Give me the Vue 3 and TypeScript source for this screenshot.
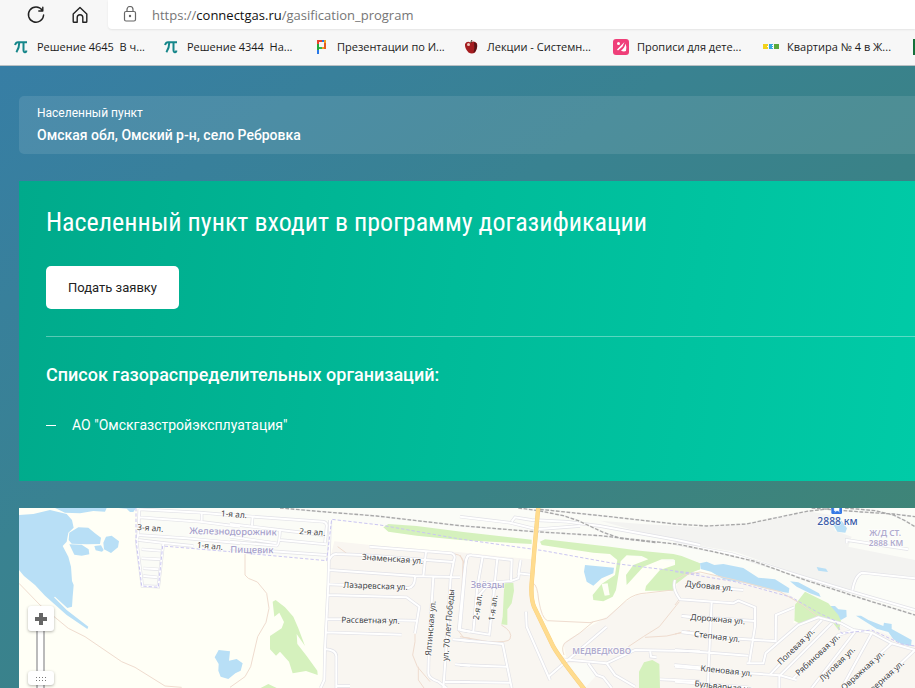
<script setup lang="ts">
import { computed, ref } from 'vue'

interface Bookmark { title: string; icon: string }
interface Shape { kind: string; dx: number; d: string }
interface Label { kind: string; x: number; y: number; text: string; angle?: number }

const bookmarks: Bookmark[] = [
  { title: 'Решение 4645  В ч...', icon: 'pi' },
  { title: 'Решение 4344  На...', icon: 'pi' },
  { title: 'Презентации по И...', icon: 'p' },
  { title: 'Лекции - Системн...', icon: 'apple' },
  { title: 'Прописи для дете...', icon: 'pink' },
  { title: 'Квартира № 4 в Ж...', icon: 'squares' },
  { title: '', icon: 'green' },
]

const organizations = ['АО "Омскгазстройэксплуатация"']
const zoomLevel = ref(106)

// Map geometry: dx is the horizontal origin of each map sector.
const W = 0
const M = 690
const C = 1380
const E = 2025

const shapes: Shape[] = [
  { kind: 'pale', dx: 0, d: 'M410 24H2745V440L2600 395 2525 390 2480 340 2360 285 2050 190 1640 130 1000 60 990 180 600 150 490 135 480 265 425 260Z' },
  { kind: 'industry', dx: E, d: 'M-225 62L-100 72 80 82 220 70 400 34 466 45 480 92 530 110 520 140 720 180V230L560 216 530 270 350 215 180 155 0 125Z' },
  { kind: 'urban', dx: M, d: 'M313 124L450 138 690 157 905 178 902 310 970 440 1010 480 1000 430 1020 415 1130 350 1180 310 1220 285 1335 272 1345 235 1390 218 1500 232 1665 275 1700 300 1690 370 1780 350 1860 392 1950 395 2060 440V570H275L290 410 298 185Z' },
  { kind: 'urban', dx: C, d: 'M310 478L400 485 390 540 350 564 280 440Z' },
  { kind: 'pale', dx: C, d: 'M315 490L388 490 410 525 375 564Z' },

  { kind: 'water', dx: W, d: 'M57 45L100 42 150 30 200 42 216 60 221 83 205 98 200 125 188 138 205 170 213 200 216 243 221 255 218 290 216 320 202 324 165 290 162 292 200 330 265 380 262 387 200 345 135 287 105 255 72 228 57 210Z' },
  { kind: 'water', dx: W, d: 'M165 24L195 38 240 40 280 33 315 35 320 24Z M355 24H408L400 36 390 36 380 26Z' },
  { kind: 'water', dx: W, d: 'M208 98L235 82 265 83 285 100 303 113 300 132 260 133 215 131 206 120Z M208 133L245 134 266 148 268 163 245 167 223 164Z M283 138L303 136 311 150 306 155 287 151Z M318 110L335 107 357 124 354 142 333 159 312 148 310 128Z' },
  { kind: 'water', dx: W, d: 'M656 450L690 454 687 482 710 477 728 490 722 512 706 520 685 537 662 530 655 512 656 492 644 472Z' },
  { kind: 'water', dx: C, d: 'M375 195L462 203 460 220 425 235 400 257 380 245 372 215Z' },
  { kind: 'water', dx: E, d: 'M75 190L95 185 118 195 145 192 205 204 250 233 300 238 343 265 341 279 280 268 215 250 145 237 108 215 77 207Z M345 244L370 247 432 280 437 291 405 280 365 260Z M425 201L453 206 459 216 430 212Z M467 318L480 318 490 328 514 330 515 350 498 360 480 352Z M543 347L558 347 580 360 625 378 627 368 650 372 650 387 710 420 708 438 680 432 655 418 640 396 605 386Z M468 62L500 62 516 85 511 98 487 95Z' },

  { kind: 'green', dx: M, d: 'M128 305L137 300 165 322 190 350 205 385 225 438 200 402 202 432 230 468 262 512 263 525 228 513 188 520 177 485 150 455 138 467 120 448 120 408 155 385 162 366 148 338 133 350Z M92 564L115 552 140 564Z' },
  { kind: 'green', dx: M, d: 'M460 82L475 72 560 78 700 96 905 119 905 132 690 120 560 107 475 95Z' },
  { kind: 'green', dx: C, d: 'M240 125L255 118 450 140 540 152 640 162 665 168 720 190 720 208 690 220 640 258 640 272 555 272 558 258 600 210 660 190 640 178 605 178 550 200 500 255 498 225 520 195 565 178 545 168 500 166 482 184 468 270 458 290 430 304 400 300 398 285 425 252 465 225 472 180 450 162 400 158 245 135Z' },
  { kind: 'base', dx: C, d: 'M425 252L443 250 449 285 434 287Z' },
  { kind: 'green', dx: C, d: 'M133 250L160 248 162 272 155 310 142 328 142 375 124 373 128 350Z M537 515L552 487 577 480 598 492 600 564H537Z' },
  { kind: 'green', dx: E, d: 'M0 167L72 190 75 208 20 222 0 243Z M360 314L390 275 460 310 490 345 498 362 492 392 475 370 430 352 373 370 358 362Z' },
]

const trails: Shape[] = [
  { kind: '', dx: W, d: 'M57 250L120 315 205 385 255 410 365 485 405 502 495 558 545 562' },
  { kind: '', dx: M, d: 'M45 162V225L55 235 82 246 110 280 117 325 108 367 83 410 62 500 45 530 0 562 M323 140L350 160 M675 162Q700 165 702 195L698 250 695 310 683 390 700 412 720 415 M555 402V425L548 465 562 500 600 545 M565 500V540L582 564' },
  { kind: '', dx: C, d: 'M0 165L9 185 5 300 0 380 M220 250Q232 255 236 300Q245 355 262 362L390 368 440 355 500 300Q525 280 560 279L638 270 M400 365Q360 402 316 428Q302 440 312 465 M505 440L550 410 598 380 658 305 M555 412L620 408 690 392 M124 375Q160 395 150 417Q145 428 85 425L0 410' },
  { kind: '', dx: E, d: 'M0 240L30 224 75 216 180 240 315 275 375 310 440 358 M0 315L15 295 M0 402L40 393' },
]

const roads: Shape[] = [
  { kind: 'minor', dx: W, d: 'M418 28L415 100 410 125 427 258 475 260 490 130 M418 52L600 65 720 80 M418 28L605 38 720 48 M605 35V62 M412 105L560 115 720 130 M415 120L484 128 580 138 M425 148L482 152 M425 175L480 178 M430 205L475 208 M430 228L472 232' },
  { kind: 'minor', dx: M, d: 'M0 45L280 65Q292 68 290 80L285 128 M68 48L66 76 M0 72L150 90 280 105 M0 110L140 130 M0 125L140 137Q148 135 150 90 M0 145L290 165 M150 120L288 133' },
  { kind: '', dx: M, d: 'M300 60L295 250 285 445 283 540 272 564 M295 185Q305 160 320 162L400 165 590 180 670 186 M418 140L665 160Q678 165 672 180L662 232 M588 155L580 228 M298 210L555 228 690 232 M298 253L535 264Q556 260 555 228 M295 285L530 292 568 320 555 400 M290 357L560 362 M285 397L515 404 M285 447Q320 450 319 470V564 M319 558H360 M610 232L597 430 595 520Q595 535 625 545L650 564 M662 232L650 430 640 564 M715 165Q705 180 700 250L686 388 720 395 M668 418L720 423 M675 493L720 497 M645 546H720' },
  { kind: '', dx: C, d: 'M0 390L88 404 112 175 M0 390L18 180Q22 163 35 166L155 180 153 240 M68 170L52 260 40 395 M0 420L128 432 155 564 M0 495L140 500 M0 546L152 548 M53 290L90 248 153 243 175 235 177 220 212 224 M182 180L175 225 M198 335L200 380 270 540 M265 530L440 380 M310 478L440 490 525 450 720 454 M385 490L410 525 430 532 455 564 M440 490L465 525 525 560 M570 450L573 470 590 472 M600 538L720 544 M643 495L720 502 M665 348L720 355 M665 395L720 402' },
  { kind: '', dx: E, d: 'M0 240Q-10 265 15 298L175 310 190 302 240 322 240 380 222 492 M30 255L205 270 M110 305L98 564 M20 348L240 363 M20 397L160 414 305 424 M0 450L220 467 M0 500L225 520 315 526 365 540 M0 545L220 562 M215 490H265L272 460 370 375 430 352 498 370 535 390 590 398 650 430 720 450 M358 322L303 345 302 425 M285 524L440 360 M315 526L470 370 M313 526V564 M410 564L540 395 M500 564L590 400 M505 564L650 430 M600 564L720 450 M355 535L490 405 540 390 M532 272Q540 225 562 218L720 235 M515 130V120L700 148' },
  { kind: 'minor', dx: C, d: 'M155 65L165 52 215 60 320 65 420 78 650 120 720 135 M0 50L150 68 230 88 360 78' },
  { kind: 'minor', dx: E, d: 'M0 130L170 162 350 220 530 275 720 330' },
]

const rails: Shape[] = [
  { kind: '', dx: M, d: 'M150 24L300 37 440 48 690 77 900 94 1110 107 1345 133 1450 155 1570 183 1725 240 1900 297 2055 345' },
  { kind: '', dx: C, d: 'M175 24L235 32 310 47 355 62 430 97 480 115 590 128 M240 28L450 50 645 72 740 78 860 72 1040 34 1120 25' },
  { kind: '', dx: E, d: 'M410 24L560 36 655 42 720 50 M510 24L600 32 655 45 690 62 720 80' },
]

const borders: Shape[] = [
  { kind: '', dx: W, d: 'M408 24V120L425 258 475 262 488 138 690 155' },
  { kind: '', dx: M, d: 'M50 160L290 182 305 58 450 75 690 117 940 152 1150 190 1410 222' },
  { kind: '', dx: E, d: 'M0 215L180 245 350 292 430 338 480 362 500 400 590 390 680 432 720 438' },
]

const labels: Label[] = [
  { kind: 'street', x: 662, y: 49, text: '1-я ал.', angle: 4 },
  { kind: 'street', x: 411, y: 90, text: '3-я ал.', angle: 4 },
  { kind: 'street', x: 590, y: 143, text: '1-я ал.', angle: 5 },
  { kind: 'street', x: 897, y: 102, text: '2-я ал.', angle: 4 },
  { kind: 'place', x: 568, y: 102, text: 'Железнодорожник', angle: 1 },
  { kind: 'place', x: 691, y: 158, text: 'Пищевик', angle: 1 },
  { kind: 'street', x: 1085, y: 179, text: 'Знаменская ул.', angle: 4 },
  { kind: 'street', x: 1030, y: 263, text: 'Лазаревская ул.', angle: 2 },
  { kind: 'street', x: 1024, y: 368, text: 'Рассветная ул.', angle: 1 },
  { kind: 'street', x: 1293, y: 468, text: 'Ялтинская ул.', angle: -85 },
  { kind: 'street', x: 1344, y: 484, text: 'ул. 70 лет Победы', angle: -85 },
  { kind: 'street', x: 1436, y: 361, text: '2-я ал.', angle: -82 },
  { kind: 'street', x: 1483, y: 364, text: '1-я ал.', angle: -83 },
  { kind: 'place', x: 1412, y: 264, text: 'Звёзды' },
  { kind: 'district', x: 1717, y: 462, text: 'МЕДВЕДКОВО' },
  { kind: 'street', x: 2056, y: 259, text: 'Дубовая ул.', angle: 6 },
  { kind: 'street', x: 2071, y: 359, text: 'Дорожная ул.', angle: 5 },
  { kind: 'street', x: 2081, y: 410, text: 'Степная ул.', angle: 7 },
  { kind: 'street', x: 2101, y: 513, text: 'Кленовая ул.', angle: 6 },
  { kind: 'street', x: 2083, y: 559, text: 'Бульварная ул.', angle: 6 },
  { kind: 'street', x: 2342, y: 496, text: 'Полевая ул.', angle: -44 },
  { kind: 'street', x: 2396, y: 529, text: 'Рябиновая ул.', angle: -43 },
  { kind: 'street', x: 2468, y: 546, text: 'Луговая ул.', angle: -44 },
  { kind: 'street', x: 2533, y: 572, text: 'Овражная ул.', angle: -42 },
  { kind: 'street', x: 2598, y: 596, text: 'Северная ул.', angle: -42 },
  { kind: 'station', x: 2452, y: 74, text: '2888 км' },
  { kind: 'district', x: 2608, y: 109, text: 'Ж/Д СТ.' },
  { kind: 'district', x: 2606, y: 137, text: '2888 КМ' },
]

const lines = computed(() => [
  { name: 'trail', items: trails },
  { name: 'casing', items: roads },
  { name: 'road', items: roads },
  { name: 'rail-gap', items: rails },
  { name: 'rail', items: rails },
  { name: 'border', items: borders },
])
</script>

<template>
  <div class="window">
    <header class="browser">
      <div class="toolbar">
        <div class="nav">
          <button type="button" aria-label="Обновить">
            <svg width="20" height="20" viewBox="0 0 20 20" class="line">
              <path d="M16.2 5.2A7.6 7.6 0 1 0 17.6 10M16.8 2.2V6H12.8" />
            </svg>
          </button>
          <button type="button" aria-label="Домой">
            <svg width="20" height="20" viewBox="0 0 20 20" class="line">
              <path d="M3.2 8.9L10 2.6l6.800 6.300V16.400q0 .8-.8.8h-3.200v-4.700a2.800 2.800 0 0 0-5.600 0v4.700H4q-.8 0-.8-.8Z" />
            </svg>
          </button>
        </div>
        <div class="address">
          <svg width="16" height="18" viewBox="0 0 16 18" class="lock">
            <rect x="2.500" y="5.500" width="11" height="9.500" rx="1.500" />
            <path d="M5 5.500V3.500a3 3 0 0 1 6 0v2" />
            <circle cx="8" cy="10" r=".6" />
          </svg>
          <a href="#" class="url">https://<span class="host">connectgas.ru</span>/gasification_program</a>
        </div>
      </div>
      <nav class="bookmarks">
        <a v-for="(b, i) in bookmarks" :key="i" href="#" class="bookmark">
          <svg width="16" height="16" viewBox="0 0 16 16">
            <g v-if="b.icon === 'pi'" class="pi">
              <path d="M2 6Q3 3.200 5 3.200H14M6.300 3.500Q6.300 9 3.400 13.200M10.500 3.500V11Q10.500 13.400 12.200 13.200 13.300 13 13.500 11.500" />
            </g>
            <g v-else-if="b.icon === 'p'">
              <path fill="#e8432d" d="M4 1h5v2H6v2H4z" />
              <path fill="#20a83a" d="M4 5h2v6H4z" />
              <path fill="#2878e8" d="M4 11h2v4H4zM9 1h2v2H9z" />
              <path fill="#38b34a" d="M6 8h3v2H6z" />
              <path fill="#f0a020" d="M11 1h2v3h-2zM9 8h2v2H9z" />
              <path fill="#e55a22" d="M11 4h2v6h-2z" />
            </g>
            <g v-else-if="b.icon === 'apple'">
              <path fill="#a51d20" d="M7.500 3.500Q11 1 14 4.500 15 9 12 13.500 9 15.500 5.500 13.500 1.500 9.500 2 5 4 1.500 7.500 3.500Z" />
              <path fill="#571517" d="M11 3Q14.500 4 14 8q-.5 4-3.500 6 1.500-5 .5-11Z" />
              <ellipse cx="5.500" cy="5.500" rx="1.500" ry="1.500" fill="#f0c8be" />
              <path stroke="#48301c" d="M8 4Q8 2 9 1" fill="none" />
            </g>
            <g v-else-if="b.icon === 'pink'">
              <rect width="16" height="16" rx="3" fill="#ef3f79" />
              <circle cx="5.500" cy="4.500" r="1.500" fill="#fff" />
              <path fill="#fff" d="M11.500 3L4 10.500 5 11.500 9.500 7.500ZM12.500 4.500Q14 8 13 12 10.500 13 8 11.500 11.500 9.500 12.500 4.500Z" />
            </g>
            <g v-else-if="b.icon === 'squares'">
              <path fill="#f2d21b" d="M0 5h5v5H0z" />
              <path fill="#35a8e0" d="M6 5h4v5H6z" />
              <path fill="#5aa83c" d="M11 5h5v5h-5z" />
              <path fill="#fff" d="M4 7h1v1H4zM9 6h1v1H9zm0 2h1v1H9z" />
            </g>
            <path v-else fill="#14713a" d="M0 0h16v16H0z" />
          </svg>
          <span>{{ b.title }}</span>
        </a>
      </nav>
    </header>

    <main class="page">
      <section class="place-card">
        <div class="caption">Населенный пункт</div>
        <div class="value">Омская обл, Омский р-н, село Ребровка</div>
      </section>

      <section class="program">
        <h1>Населенный пункт входит в программу догазификации</h1>
        <button type="button" class="apply">Подать заявку</button>
        <hr />
        <h2>Список газораспределительных организаций:</h2>
        <ul>
          <li v-for="o in organizations" :key="o">{{ o }}</li>
        </ul>
      </section>

      <section class="map">
        <svg class="canvas" viewBox="57 24 2688 540" preserveAspectRatio="xMinYMin slice">
          <path
            v-for="(s, i) in shapes"
            :key="i"
            :class="s.kind"
            :d="s.d"
            :transform="`translate(${s.dx} 0)`"
          />
          <g v-for="l in lines" :key="l.name" :class="l.name">
            <path
              v-for="(s, i) in l.items"
              :key="i"
              :class="s.kind"
              :d="s.d"
              :transform="`translate(${s.dx} 0)`"
            />
          </g>
          <path class="highway-edge" d="M1615 20L1603 150 1595 250Q1592 295 1602 320L1660 440Q1680 475 1755 570" />
          <path class="highway" d="M1615 20L1603 150 1595 250Q1592 295 1602 320L1660 440Q1680 475 1755 570" />
          <rect x="2494" y="12" width="32" height="30" rx="4" fill="#3478e5" />
          <path d="M2503 24h14v8h-14zM2505 37l4-5m6 0l4 5" fill="#fff" stroke="#fff" stroke-width="2" />
          <text
            v-for="(t, i) in labels"
            :key="i"
            :class="t.kind"
            :transform="`translate(${t.x} ${t.y}) rotate(${t.angle ?? 0})`"
          >{{ t.text }}</text>
        </svg>
        <div class="zoom">
          <button type="button" aria-label="Приблизить">
            <svg width="14" height="14" viewBox="0 0 14 14"><path d="M5 1h4v4h4v4H9v4H5V9H1V5h4z" fill="#666" /></svg>
          </button>
          <input v-model.number="zoomLevel" type="range" min="0" max="146" aria-label="Масштаб" />
        </div>
      </section>
    </main>
  </div>
</template>

<style>
body { margin: 0; overflow: hidden; }
</style>

<style scoped>
.window { min-height: 100vh; display: flex; flex-direction: column; box-sizing: border-box; }
button { font: inherit; border: 0; padding: 0; cursor: pointer; }
a { color: inherit; text-decoration: none; }

.browser {
  background: #f7f7f7;
  border-bottom: 1px solid #b9c0c4;
  font-family: "Open Sans", "Noto Sans", sans-serif;
  color: #1b1b1b;
}
.toolbar { display: flex; height: 29px; }
.nav { display: flex; align-items: center; gap: 24px; padding: 0 18px 0 26px; }
.nav button { display: flex; background: none; }
.line { fill: none; stroke: #222; stroke-width: 1.4; stroke-linejoin: round; stroke-linecap: round; }
.address {
  flex: 1;
  display: flex;
  align-items: center;
  gap: 14px;
  padding-left: 14px;
  background: #fff;
  border-radius: 0 0 0 4px;
  box-shadow: 0 1px 2px rgba(0, 0, 0, 0.08);
}
.lock { fill: none; stroke: #666; stroke-width: 1.2; }
.url { font-size: 13px; line-height: 20px; color: #767676; white-space: nowrap; }
.host { color: #111; }
.bookmarks { display: flex; height: 36px; align-items: center; padding-left: 13px; overflow: hidden; }
.bookmark {
  flex: 0 0 150px;
  display: flex;
  align-items: center;
  gap: 8px;
  font-size: 11px;
  line-height: 16px;
  white-space: pre;
}
.pi { fill: none; stroke: #16868a; stroke-width: 2; }

.page {
  flex: 1;
  display: flex;
  flex-direction: column;
  gap: 27px;
  padding: 30px 0 0 19px;
  background: linear-gradient(145deg, #377ea5 0%, #398291 38%, #3a8286 60%, #418670 100%);
  font-family: Roboto, "Liberation Sans", sans-serif;
  color: #fff;
}
.place-card {
  display: flex;
  flex-direction: column;
  gap: 3px;
  padding: 9px 18px;
  border-radius: 5px 0 0 5px;
  background: rgba(255, 255, 255, 0.1);
}
.caption { font-size: 12px; line-height: 17px; }
.value { font-size: 14px; line-height: 20px; font-weight: 500; }

.program {
  padding: 25px 0 46px 27px;
  background: linear-gradient(98deg, #00aa8b 0%, #00bb99 48%, #00cba7 100%);
}
h1 {
  margin: 0 0 28px;
  font: 400 26px/32px "Roboto Condensed", "Liberation Sans Narrow", Roboto, sans-serif;
}
.apply {
  display: block;
  padding: 0 22px;
  border-radius: 5px;
  background: #fff;
  color: #222;
  font-size: 13px;
  line-height: 43px;
}
hr { margin: 27px 0 26px; border: 0; height: 1px; background: rgba(255, 255, 255, 0.35); }
h2 { margin: 0 0 28px; font-size: 18px; line-height: 24px; font-weight: 500; }
ul { margin: 0; padding: 0; list-style: none; }
li { display: flex; align-items: center; gap: 16px; font-size: 14px; line-height: 20px; }
li::before { content: ""; width: 10px; height: 1px; background: #fff; }

.map { position: relative; flex: 1 0 180px; overflow: hidden; background: #fffff6; }
.canvas { position: absolute; inset: 0; width: 100%; height: 100%; }
.pale { fill: #fbfcf7; }
.base { fill: #fffff6; }
.industry { fill: #f3f3f1; }
.urban { fill: #f9f6f1; }
.water { fill: #b8dff6; }
.green { fill: #d5f1bd; }
.trail, .casing, .road, .rail, .rail-gap, .border, .highway, .highway-edge { fill: none; }
.casing path, .road path, .rail path, .rail-gap path { fill: none; }
.trail { stroke: #efdccf; stroke-width: 3; }
.casing { stroke: #e2e2e7; stroke-width: 10; }
.road { stroke: #fff; stroke-width: 6; }
.rail-gap { stroke: #f4f4f2; stroke-width: 6; }
.rail { stroke: #a8a8a8; stroke-width: 4; stroke-dasharray: 11 5; }
.border { stroke: #cbc6f2; stroke-width: 3; stroke-dasharray: 10 6; }
.highway { stroke: #ffdc8e; stroke-width: 11; }
.highway-edge { stroke: #f7cc7c; stroke-width: 13; }
text { font-family: "Noto Sans", sans-serif; paint-order: stroke; stroke: #fff; stroke-width: 4; stroke-opacity: 0.8; }
.street { font-size: 25px; fill: #444; }
.place { font-size: 28px; font-weight: 500; fill: #a5a0ca; }
.district { font-size: 25px; font-weight: 600; fill: #b0abce; }
.station { font-size: 31px; font-weight: 500; fill: #3a5ba8; }

.zoom { position: absolute; top: 98px; left: 9px; display: flex; flex-direction: column; }
.zoom button {
  z-index: 1;
  display: flex;
  align-items: center;
  justify-content: center;
  width: 26px;
  height: 25px;
  background: #fff;
  border-radius: 3px;
  box-shadow: 0 1px 3px rgba(0, 0, 0, 0.3);
}
.zoom input {
  appearance: none;
  writing-mode: vertical-lr;
  direction: rtl;
  width: 26px;
  height: 160px;
  margin: 0;
  background: linear-gradient(90deg, transparent 8px, #bbb 8px 10px, #fff 10px 15px, #bbb 15px 17px, transparent 17px);
}
.zoom input::-webkit-slider-thumb {
  appearance: none;
  width: 26px;
  height: 14px;
  border-radius: 3px;
  background:
    repeating-linear-gradient(90deg, #777 0 1px, transparent 1px 3px) 8px 6px / 10px 1px no-repeat,
    repeating-linear-gradient(90deg, #777 0 1px, transparent 1px 3px) 8px 9px / 10px 1px no-repeat,
    #fff;
  box-shadow: 0 1px 3px rgba(0, 0, 0, 0.3);
}
</style>
